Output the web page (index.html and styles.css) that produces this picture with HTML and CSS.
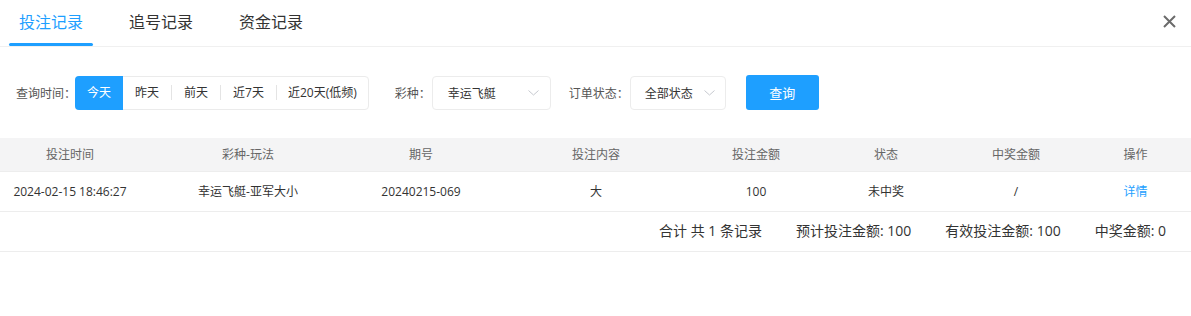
FILE: index.html
```html
<!DOCTYPE html>
<html lang="zh-CN">
<head>
<meta charset="utf-8">
<title>投注记录</title>
<link rel="stylesheet" href="styles.css">
</head>
<body>
<div class="panel">
  <div class="tabs">
    <div class="tab active">投注记录</div>
    <div class="tab">追号记录</div>
    <div class="tab">资金记录</div>
    <div class="close">
      <svg width="13" height="13" viewBox="0 0 13 13"><path d="M1 1 L12 12 M12 1 L1 12" stroke="#6b6b6b" stroke-width="2" fill="none"/></svg>
    </div>
  </div>

  <div class="filters">
    <span class="label">查询时间：</span>
    <div class="seg">
      <span class="seg-item on">今天</span>
      <span class="seg-item">昨天</span>
      <i class="sep"></i>
      <span class="seg-item">前天</span>
      <i class="sep"></i>
      <span class="seg-item">近7天</span>
      <i class="sep"></i>
      <span class="seg-item seg-last">近20天(低频)</span>
    </div>
    <span class="label lbl-game">彩种：</span>
    <div class="select sel-game">
      <span>幸运飞艇</span>
      <svg width="11" height="6" viewBox="0 0 11 6"><polyline points="0.5,0.5 5.5,5 10.5,0.5" fill="none" stroke="#c6c9cf" stroke-width="1"/></svg>
    </div>
    <span class="label lbl-status">订单状态：</span>
    <div class="select sel-status">
      <span>全部状态</span>
      <svg width="11" height="6" viewBox="0 0 11 6"><polyline points="0.5,0.5 5.5,5 10.5,0.5" fill="none" stroke="#c6c9cf" stroke-width="1"/></svg>
    </div>
    <button class="btn">查询</button>
  </div>

  <div class="table">
    <div class="tr thead">
      <div>投注时间</div>
      <div>彩种-玩法</div>
      <div>期号</div>
      <div>投注内容</div>
      <div>投注金额</div>
      <div>状态</div>
      <div>中奖金额</div>
      <div class="last">操作</div>
    </div>
    <div class="tr tbody">
      <div>2024-02-15 18:46:27</div>
      <div>幸运飞艇-亚军大小</div>
      <div>20240215-069</div>
      <div>大</div>
      <div>100</div>
      <div>未中奖</div>
      <div>/</div>
      <div class="last"><a class="link">详情</a></div>
    </div>
    <div class="tfoot">
      <span>合计 共 1 条记录</span>
      <span>预计投注金额: 100</span>
      <span>有效投注金额: 100</span>
      <span>中奖金额: 0</span>
    </div>
  </div>
</div>
</body>
</html>
```
FILE: styles.css
```css
html, body {
  margin: 0;
  padding: 0;
  background: #fff;
}
body {
  font-family: "Open Sans", "Noto Sans CJK SC", sans-serif;
  color: #333;
  font-size: 12px;
}
.panel {
  width: 1191px;
}
.tabs {
  display: flex;
  align-items: stretch;
  height: 46px;
  border-bottom: 1px solid #f0f0f0;
  padding-left: 9px;
  gap: 26px;
}
.tab {
  position: relative;
  padding: 0 10px;
  font-size: 16px;
  line-height: 44px;
  color: #333;
}
.tab.active {
  color: #1e9fff;
}
.tab.active::after {
  content: "";
  position: absolute;
  left: 0;
  right: 0;
  bottom: 0;
  height: 3px;
  border-radius: 2px;
  background: #1e9fff;
}
.close {
  margin-left: auto;
  margin-right: 15px;
  display: flex;
  align-items: center;
  padding-bottom: 3px;
}
.close svg {
  display: block;
}
.filters {
  display: flex;
  align-items: center;
  padding: 28px 0 0 16px;
  height: 35px;
}
.label {
  color: #555;
  font-size: 12px;
  white-space: nowrap;
}
.seg {
  display: flex;
  align-items: center;
  height: 32px;
  border: 1px solid #ebebeb;
  border-radius: 4px;
  margin-left: -1px;
}
.seg-item {
  padding: 0 12px;
  line-height: 34px;
  color: #333;
  white-space: nowrap;
}
.seg-item.seg-last {
  padding: 0 11px 0 11px;
}
.seg-item.on {
  background: #1e9fff;
  color: #fff;
  margin: -1px 0 -1px -1px;
  border-radius: 4px 0 0 4px;
}
.sep {
  display: block;
  width: 1px;
  height: 15px;
  background: #e4e4e4;
}
.lbl-game {
  margin-left: 26px;
}
.lbl-status {
  margin-left: 18px;
}
.select {
  display: flex;
  align-items: center;
  justify-content: space-between;
  box-sizing: border-box;
  height: 34px;
  border: 1px solid #ececec;
  border-radius: 4px;
  color: #333;
}
.sel-game {
  width: 119px;
  padding: 0 11px 0 15px;
  margin-left: 1px;
}
.sel-status {
  width: 96px;
  padding: 0 10px 0 14px;
  margin-left: 1px;
}
.select svg {
  display: block;
}
.btn {
  margin-left: 20px;
  width: 73px;
  height: 35px;
  border: 0;
  border-radius: 3px;
  background: #1e9fff;
  color: #fff;
  font-family: inherit;
  font-size: 13px;
  padding: 0;
}
.table {
  margin-top: 28px;
}
.tr {
  display: grid;
  grid-template-columns: 140px 216px 130px 220px 100px 160px 100px 125px;
  border-bottom: 1px solid #ededed;
  text-align: center;
}
.tr > div {
  white-space: nowrap;
}
.tr > .last {
  padding-left: 14px;
}
.thead {
  background: #f4f4f5;
  height: 33px;
  line-height: 33px;
  color: #666;
}
.tbody {
  height: 39px;
  line-height: 39px;
  color: #333;
}
.link {
  color: #1e9fff;
}
.tfoot {
  display: flex;
  justify-content: flex-end;
  gap: 34px;
  padding-right: 25px;
  height: 39px;
  line-height: 38px;
  font-size: 14px;
  color: #333;
  border-bottom: 1px solid #ededed;
}
```
